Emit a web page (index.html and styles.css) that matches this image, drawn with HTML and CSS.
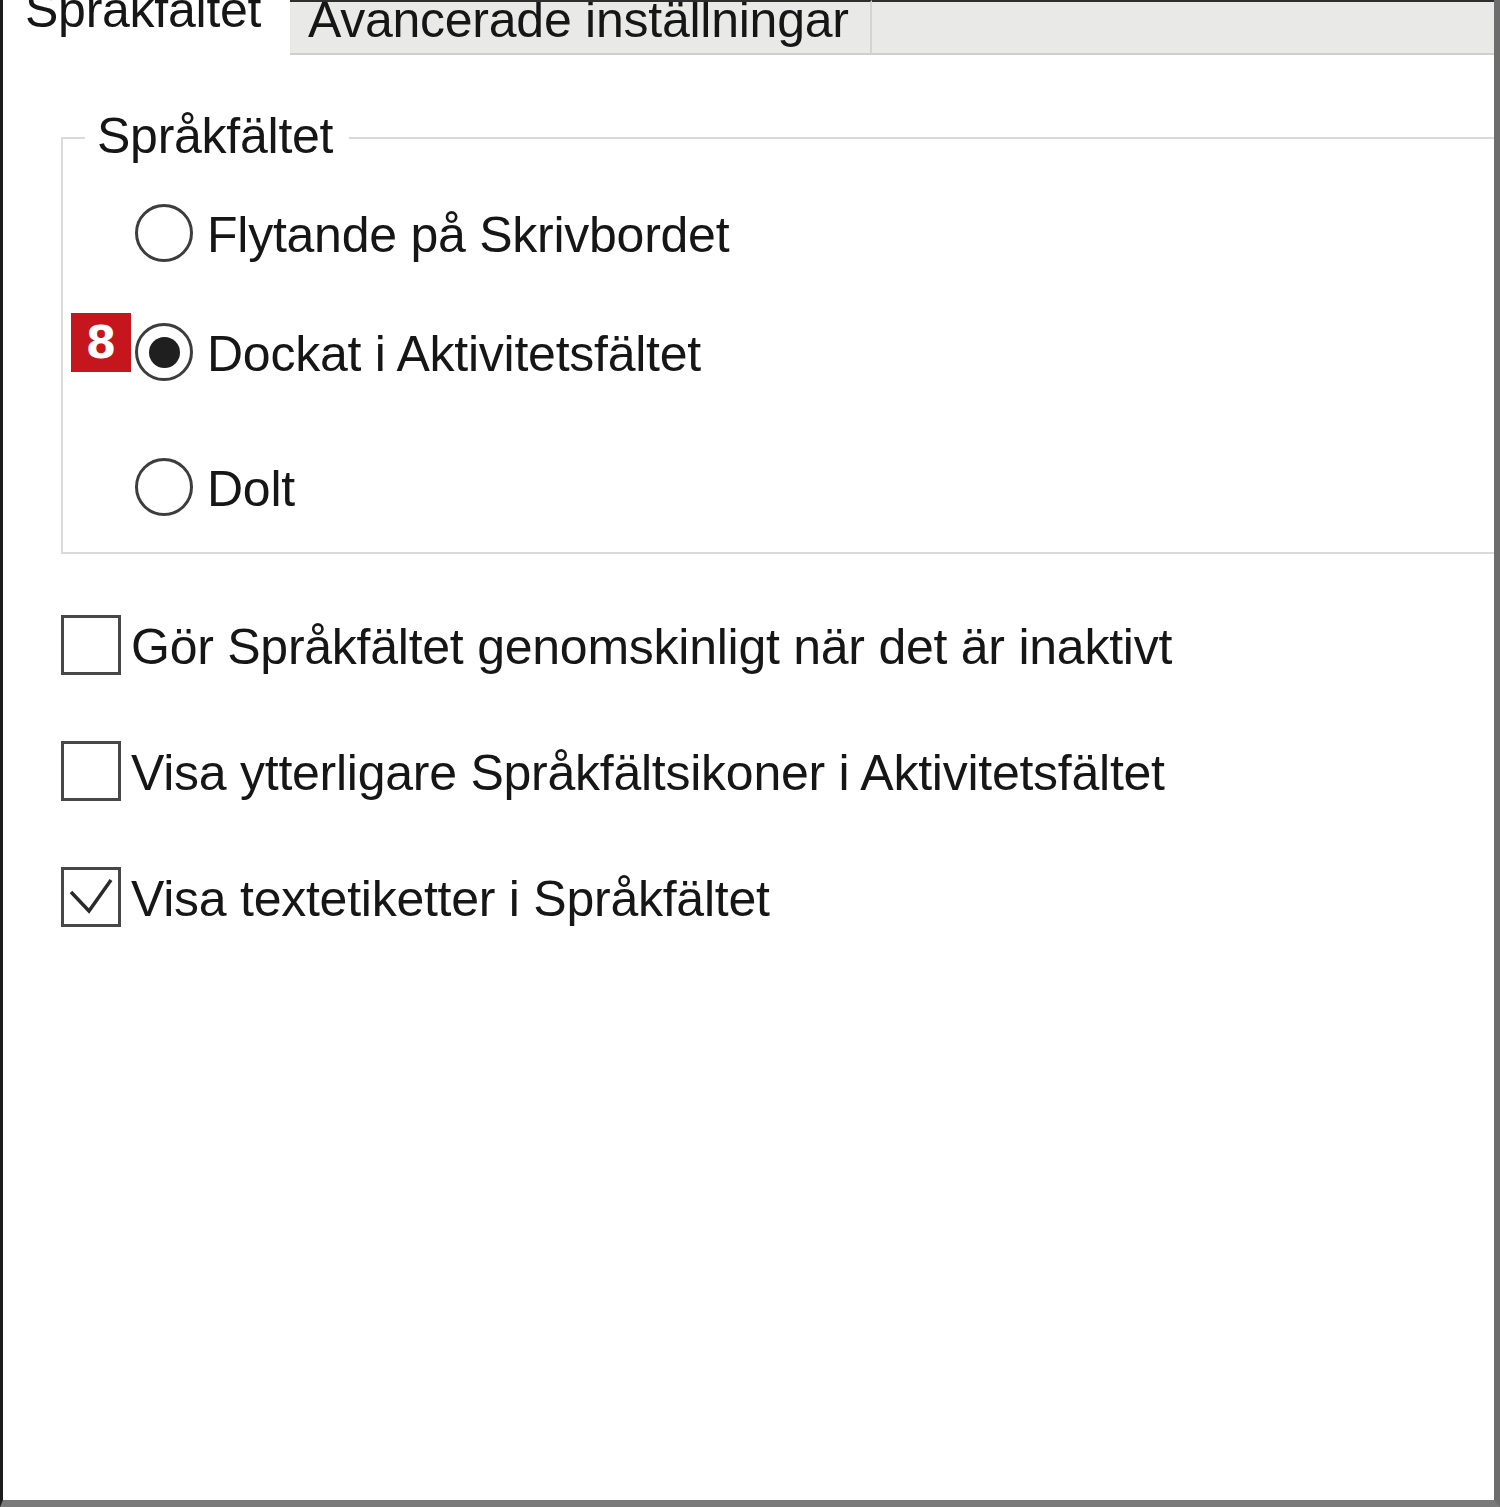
FILE: index.html
```html
<!DOCTYPE html>
<html lang="sv">
<head>
<meta charset="utf-8">
<title>Textinmatningstjänster</title>
<link rel="stylesheet" href="styles.css">
</head>
<body>
<div class="window">
  <div class="tabs">
    <div class="tab tab-active"><span class="tab-label">Språkfältet</span></div>
    <div class="tab tab-inactive"><span class="tab-label">Avancerade inställningar</span></div>
    <div class="tab-rest"></div>
  </div>
  <div class="panel">
    <fieldset class="group">
      <legend class="legend">Språkfältet</legend>
      <div class="opt radio-opt opt-first">
        <span class="radio"></span>
        <span class="label">Flytande på Skrivbordet</span>
      </div>
      <div class="opt radio-opt opt-second">
        <span class="radio radio-on"><span class="badge">8</span></span>
        <span class="label">Dockat i Aktivitetsfältet</span>
      </div>
      <div class="opt radio-opt opt-third">
        <span class="radio"></span>
        <span class="label">Dolt</span>
      </div>
    </fieldset>
    <div class="checks">
      <div class="opt">
        <span class="checkbox"></span>
        <span class="label">Gör Språkfältet genomskinligt när det är inaktivt</span>
      </div>
      <div class="opt">
        <span class="checkbox"></span>
        <span class="label">Visa ytterligare Språkfältsikoner i Aktivitetsfältet</span>
      </div>
      <div class="opt">
        <span class="checkbox">
          <svg class="tick" viewBox="0 0 54 54" width="54" height="54"><path d="M7 22 L25 41 L47 10" fill="none" stroke="#2a2a2a" stroke-width="3.5" stroke-linejoin="miter"/></svg>
        </span>
        <span class="label">Visa textetiketter i Språkfältet</span>
      </div>
    </div>
  </div>
</div>
</body>
</html>
```
FILE: styles.css
```css
html, body {
  margin: 0;
  padding: 0;
  background: #ffffff;
}

.window {
  width: 1500px;
  height: 1507px;
  box-sizing: border-box;
  border-left: 3px solid #1c1c1c;
  border-right: 6px solid #6d6d6d;
  border-bottom: 7px solid #7a7a7a;
  background: #ffffff;
  overflow: hidden;
  font-family: "Liberation Sans", Arial, sans-serif;
  font-size: 50px;
  letter-spacing: -0.25px;
  color: #161616;
}

.tabs {
  display: flex;
  height: 55px;
}

.tab {
  box-sizing: border-box;
  height: 55px;
  overflow: hidden;
  white-space: nowrap;
}

.tab-label {
  display: block;
  line-height: 50px;
}

.tab-active {
  width: 287px;
  background: #ffffff;
  padding-left: 22px;
}

.tab-active .tab-label {
  margin-top: -15px;
}

.tab-inactive {
  width: 582px;
  background: #e9eae8;
  border-top: 2px solid #2e2e2e;
  border-bottom: 2px solid #cfd0ce;
  border-right: 2px solid #d3d4d2;
  padding-left: 18px;
}

.tab-inactive .tab-label {
  margin-top: -7px;
}

.tab-rest {
  flex: 1;
  box-sizing: border-box;
  height: 55px;
  background: #e9eae8;
  border-top: 2px solid #2e2e2e;
  border-bottom: 2px solid #cfd0ce;
}

.panel {
  padding-left: 58px;
}

.group {
  margin: 58px 0 0 0;
  padding: 0 0 35px 0;
  border: 2px solid #dadada;
  border-right: none;
  min-width: 0;
}

.legend {
  margin-left: 22px;
  padding: 0 16px 4px 12px;
  line-height: 46px;
}

.opt {
  display: flex;
  align-items: center;
  height: 60px;
  gap: 10px;
  white-space: nowrap;
}

.radio-opt {
  margin-left: 72px;
  gap: 14px;
}

.label {
  padding-top: 3px;
}

.opt-first {
  margin-top: 40px;
}

.opt-second {
  margin-top: 59px;
}

.opt-third {
  margin-top: 75px;
}

.radio {
  position: relative;
  width: 58px;
  height: 58px;
  box-sizing: border-box;
  border: 3px solid #3d3d3d;
  border-radius: 50%;
  background: #ffffff;
  display: flex;
  align-items: center;
  justify-content: center;
  flex: none;
}

.radio-on::after {
  content: "";
  width: 31px;
  height: 31px;
  border-radius: 50%;
  background: #1f1f1f;
}

.badge {
  position: absolute;
  left: -67px;
  top: -13px;
  width: 60px;
  height: 59px;
  background: #c5161d;
  color: #ffffff;
  font-family: "DejaVu Sans", sans-serif;
  font-weight: bold;
  font-size: 44px;
  letter-spacing: 0;
  line-height: 59px;
  text-align: center;
}

.checks {
  margin-top: 61px;
  display: flex;
  flex-direction: column;
  gap: 66px;
}

.checkbox {
  width: 60px;
  height: 60px;
  box-sizing: border-box;
  border: 3px solid #474747;
  background: #ffffff;
  display: flex;
  align-items: center;
  justify-content: center;
  flex: none;
}

.tick {
  display: block;
}
```
